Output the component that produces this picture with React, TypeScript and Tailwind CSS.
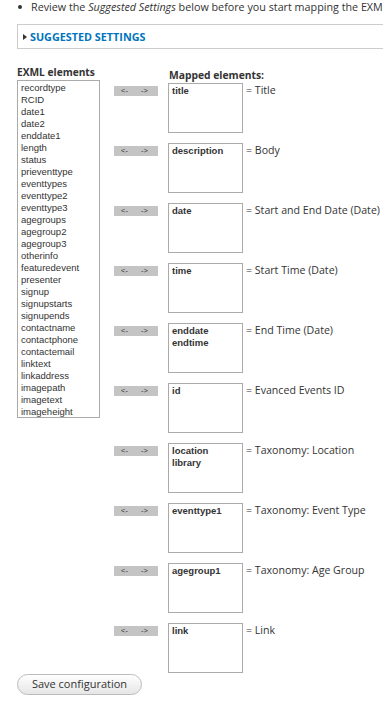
import React from "react";

const exml = [
  "recordtype","RCID","date1","date2","enddate1","length","status","prieventtype",
  "eventtypes","eventtype2","eventtype3","agegroups","agegroup2","agegroup3","otherinfo",
  "featuredevent","presenter","signup","signupstarts","signupends","contactname",
  "contactphone","contactemail","linktext","linkaddress","imagepath","imagetext","imageheight",
];

const rows: { items: string[]; label: string }[] = [
  { items: ["title"], label: "= Title" },
  { items: ["description"], label: "= Body" },
  { items: ["date"], label: "= Start and End Date (Date)" },
  { items: ["time"], label: "= Start Time (Date)" },
  { items: ["enddate", "endtime"], label: "= End Time (Date)" },
  { items: ["id"], label: "= Evanced Events ID" },
  { items: ["location", "library"], label: "= Taxonomy: Location" },
  { items: ["eventtype1"], label: "= Taxonomy: Event Type" },
  { items: ["agegroup1"], label: "= Taxonomy: Age Group" },
  { items: ["link"], label: "= Link" },
];

const lucida = "font-['Open_Sans',sans-serif]";
const helv = "font-['Liberation_Sans',Arial,sans-serif]";

export default function App() {
  return (
    <div className={`w-[383px] h-[727px] overflow-hidden bg-white text-[#333] ${lucida}`}>
      <div className="flex items-center h-[14px] pl-[18px] text-[10.75px] leading-[14px] whitespace-nowrap">
        <span className="w-[4px] h-[4px] rounded-full bg-[#333] mr-[9px] shrink-0" />
        <span>
          Review the <em>Suggested Settings</em> below before you start mapping the EXML
        </span>
      </div>
      <div className="ml-[17px] mt-[10px] w-[420px] h-[25px] border border-[#ccc] flex items-center pl-[5px]">
        <svg width="4" height="6" viewBox="0 0 4 6" className="mr-[3px]">
          <path d="M0 0 L4 3 L0 6 Z" fill="#333" />
        </svg>
        <span className="text-[#0074bd] font-bold text-[10.8px] leading-[14px] uppercase">
          Suggested Settings
        </span>
      </div>

      <div className="flex items-start pl-[17px] mt-[17px]">
        <div className="w-[83px] shrink-0">
          <div className="font-bold text-[10.2px] leading-[12px] whitespace-nowrap">EXML elements</div>
          <div className={`mt-[2px] h-[338px] border border-[#aaa] pt-[1px] pl-[3px] ${helv} text-[9.5px] leading-[12px]`}>
            {exml.map((e) => (
              <div key={e}>{e}</div>
            ))}
          </div>
        </div>
        <div className="ml-[14px] pt-[3px]">
          <div className="ml-[55px] font-bold text-[10.3px] leading-[12px] whitespace-nowrap">Mapped elements:</div>
          <div className="mt-[2px] flex flex-col gap-[10px]">
            {rows.map((r) => (
              <div key={r.label} className="flex items-start">
                <div className={`mt-[3px] w-[44px] h-[10px] bg-[#c4c4c4] flex items-center ${helv} text-[7.5px] leading-[10px] text-[#333]`}>
                  <span className="ml-[7px]">&lt;-</span>
                  <span className="ml-[13px]">-&gt;</span>
                </div>
                <div className={`ml-[10px] w-[75px] h-[50px] border border-[#aaa] pt-[1px] pl-[3px] ${helv} font-bold text-[9.5px] leading-[12px]`}>
                  {r.items.map((i) => (
                    <div key={i}>{i}</div>
                  ))}
                </div>
                <div className="ml-[3px] text-[10.6px] leading-[14px] whitespace-nowrap">{r.label}</div>
              </div>
            ))}
          </div>
        </div>
      </div>

      <div className="ml-[17px] mt-[1px] w-[125px] h-[21px] rounded-full border border-[#bbb] bg-gradient-to-b from-white to-[#e6e6e6] flex items-center justify-center text-[11px] text-[#333]">
        Save configuration
      </div>
    </div>
  );
}
